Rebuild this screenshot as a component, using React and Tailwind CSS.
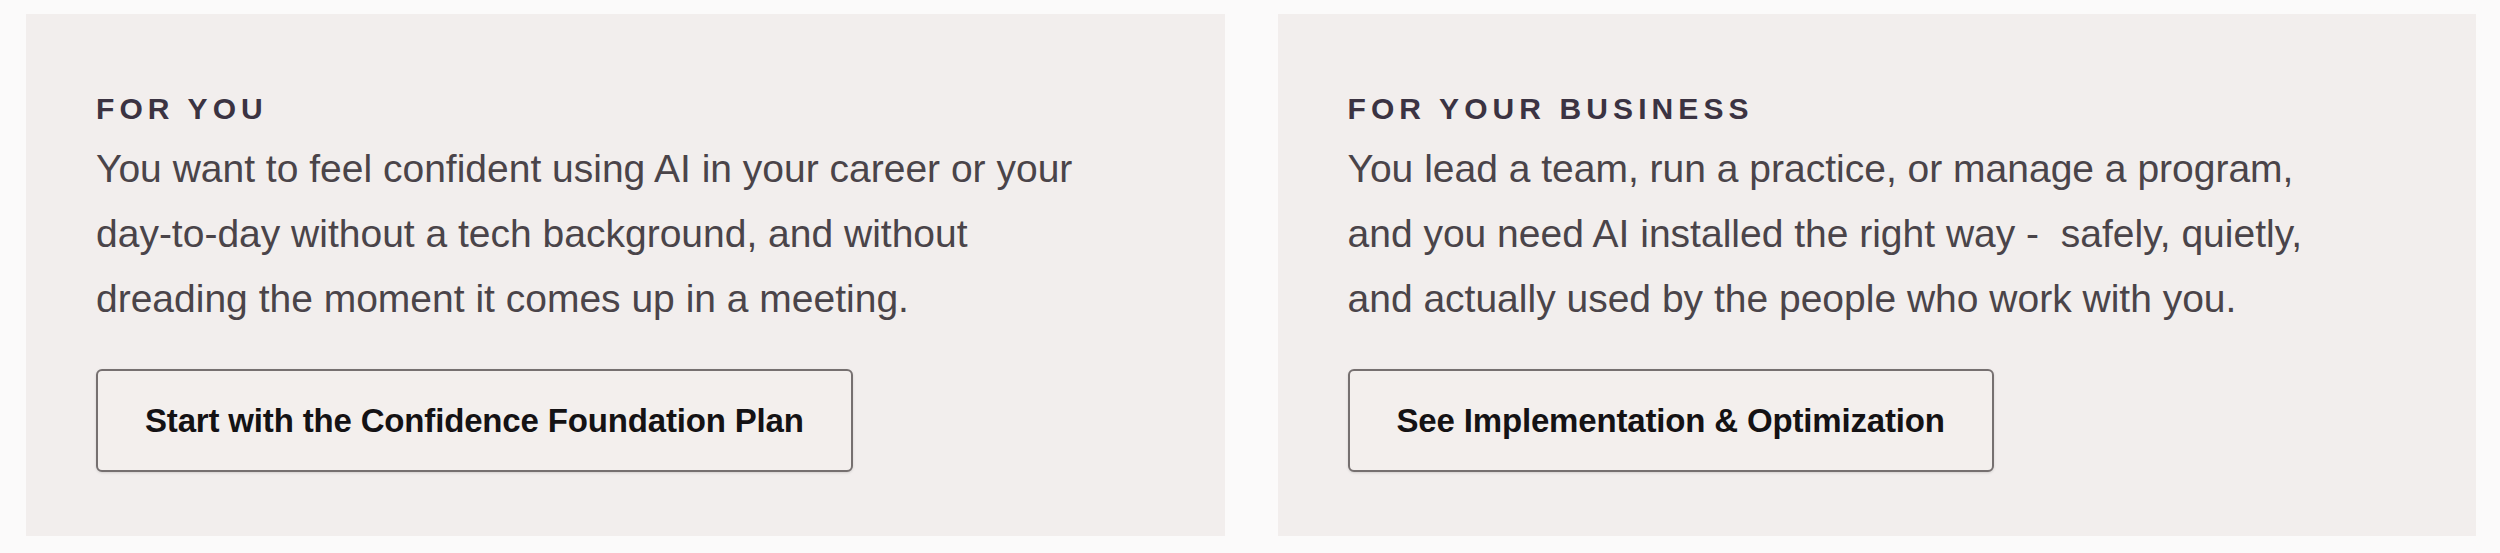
import React from "react";

const paths = [
  {
    id: "personal",
    label: "FOR YOU",
    lines: [
      "You want to feel confident using AI in your career or your",
      "day-to-day without a tech background, and without",
      "dreading the moment it comes up in a meeting.",
    ],
    cta: "Start with the Confidence Foundation Plan",
  },
  {
    id: "business",
    label: "FOR YOUR BUSINESS",
    lines: [
      "You lead a team, run a practice, or manage a program,",
      "and you need AI installed the right way -  safely, quietly,",
      "and actually used by the people who work with you.",
    ],
    cta: "See Implementation & Optimization",
  },
];

const PathCard = ({ label, lines, cta }) => (
  <div className="flex-1 bg-[#f2eeed] pl-[70px] pr-10 pt-[78px] pb-[64px]">
    {/* EYEBROW */}
    <p className="text-[30px] leading-[34px] font-bold tracking-[0.17em] text-[#3b3342]">
      {label}
    </p>

    {/* COPY */}
    <p className="mt-[10px] text-[39px] leading-[65px] text-[#4a4449] whitespace-pre">
      {lines.map((line) => (
        <span key={line} className="block">
          {line}
        </span>
      ))}
    </p>

    {/* CTA */}
    <button className="mt-[38px] h-[103px] px-[47px] border-2 border-[#767070] rounded-md bg-[#f3efed] shadow-sm text-[33px] font-bold tracking-[-0.005em] text-[#141214]">
      {cta}
    </button>
  </div>
);

export default function App() {
  return (
    <div
      className="w-[2500px] h-[553px] bg-[#fbfafa] pt-[14px] pl-[26px] pr-[24px]"
      style={{ fontFamily: "'Liberation Sans', Arial, sans-serif" }}
    >
      <div className="flex gap-[53px] h-[522px]">
        {paths.map((p) => (
          <PathCard key={p.id} {...p} />
        ))}
      </div>
    </div>
  );
}
